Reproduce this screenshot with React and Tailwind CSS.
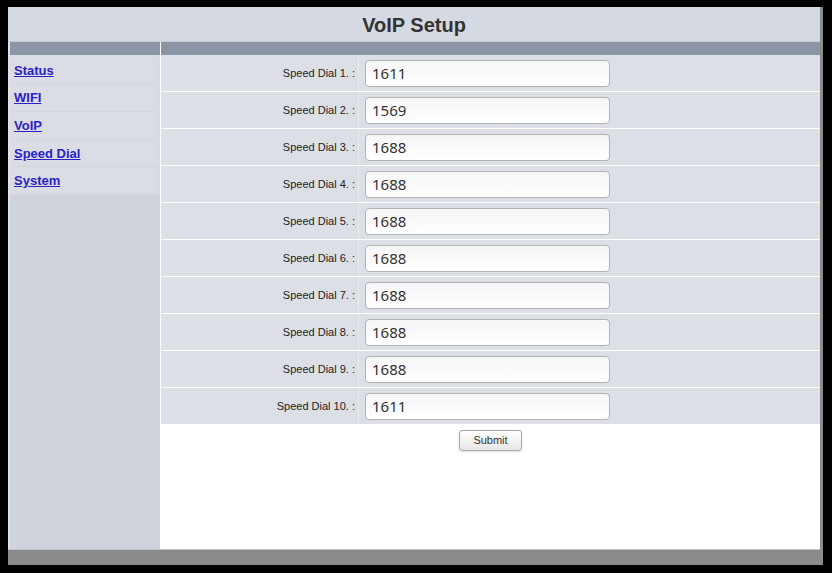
import React from 'react';

const dials = ['1611', '1569', '1688', '1688', '1688', '1688', '1688', '1688', '1688', '1611'];
const links = ['Status', 'WIFI', 'VoIP', 'Speed Dial', 'System'];

export default function App() {
    return (
        <div className="w-[832px] h-[573px] bg-black pl-[8px] pt-[7px] pr-[9px] pb-[8px]" style={{ fontFamily: '"Liberation Sans", Arial, sans-serif' }}>
            <div className="w-full h-full flex bg-[#8a8b8c]">
                <div className="flex-1 flex flex-col">
                    {/* header */}
                    <div className="h-[35px] bg-[#d5d9e1] flex items-center justify-center border-b border-[#c8ccd4]">
                        <h1 className="text-[20px] font-bold text-[#333] pt-[2px]">VoIP Setup</h1>
                    </div>

                    <div className="flex-1 flex bg-[#dfe2e7] pl-[2px]">
                        {/* sidebar */}
                        <div className="w-[150px] flex flex-col bg-[#cfd3db]">
                            <div className="h-[13px] bg-[#8b95a5]"></div>
                            <div className="flex flex-col bg-[#d8dbe2] pr-[3px] pt-[2px]">
                                {links.map((l) => (
                                    <div key={l} className="h-[27.6px] flex items-center pl-[4px] bg-[#dadde3] border-b border-[#d3d6dd]">
                                        <a href="#" className="text-[13px] font-bold text-[#2b22c4] underline leading-none">{l}</a>
                                    </div>
                                ))}
                            </div>
                        </div>

                        {/* main */}
                        <div className="flex-1 flex flex-col bg-white border-l border-white">
                            <div className="h-[13px] bg-[#8b95a5]"></div>
                            {dials.map((v, i) => (
                                <div key={i} className="h-[37px] flex border-b border-white bg-[#dcdfe5]">
                                    <div className="w-[197px] flex items-center justify-end pr-[3px] text-[11px] text-[#222]">
                                        Speed Dial {i + 1}. :
                                    </div>
                                    <div className="flex-1 flex items-center pl-[6px] border-l border-[#e8eaee]">
                                        <input
                                            readOnly
                                            value={v}
                                            className="w-[245px] h-[27px] rounded-[4px] border border-[#b3b3b3] bg-gradient-to-b from-[#f6f6f6] to-white px-[6px] text-[15px] text-[#333] outline-none"
                                            style={{ fontFamily: '"Noto Sans", sans-serif' }}
                                        />
                                    </div>
                                </div>
                            ))}
                            <div className="flex justify-center pt-[5px]">
                                <button className="w-[63px] h-[21px] rounded-[3px] border border-[#a9a9a9] bg-gradient-to-b from-white to-[#e6e6e6] text-[11px] text-[#333] shadow-sm">
                                    Submit
                                </button>
                            </div>
                        </div>
                    </div>

                    {/* footer bar */}
                    <div className="h-[16px] bg-[#8a8b8c] border-t border-[#bfc1c3]"></div>
                </div>
                <div className="w-[3px]"></div>
            </div>
        </div>
    );
}
